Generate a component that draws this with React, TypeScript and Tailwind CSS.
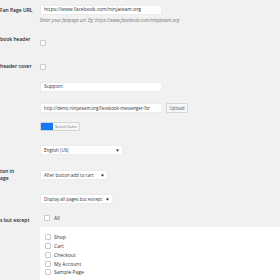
import React from "react";

const pages = ["Shop", "Cart", "Checkout", "My Account", "Sample Page"];

function Box({ className = "" }: { className?: string }) {
  return (
    <span
      className={`block w-[6px] h-[6px] shrink-0 border border-[#c8cbce] bg-white rounded-[1px] ${className}`}
    />
  );
}

function Select({ label, width }: { label: string; width: string }) {
  return (
    <div
      className={`flex items-center justify-between h-[10px] ${width} bg-white border border-[#ececec] pl-[3px] pr-[3px] text-[4.5px] text-[#32373c] whitespace-nowrap overflow-hidden`}
    >
      <span>{label}</span>
      <svg width="3" height="3" viewBox="0 0 4 3" className="shrink-0 ml-[2px]">
        <path d="M0 0 L4 0 L2 3 Z" fill="#222" />
      </svg>
    </div>
  );
}

export default function App() {
  const label = "w-[40px] shrink-0 font-semibold text-[#23282d] whitespace-nowrap overflow-hidden leading-[6px]";
  const input =
    "h-[10px] w-[122px] shrink-0 bg-white border border-[#ececec] px-[3px] flex items-center text-[#32373c] whitespace-nowrap overflow-hidden";

  return (
    <div
      className="w-[280px] h-[280px] overflow-hidden bg-[#f1f1f1] text-[5px] text-[#444]"
      style={{ fontFamily: '"Open Sans", "Noto Sans", sans-serif' }}
    >
      <div className="flex flex-col">
        {/* fan page url */}
        <div className="flex items-start mt-[5px]">
          <div className={`${label} pt-[2px]`}>Fan Page URL</div>
          <div className="flex flex-col">
            <div className={input}>https://www.facebook.com/ninjateam.org</div>
            <div className="mt-[2px] italic text-[#777] text-[4.6px] leading-[6px] whitespace-nowrap">
              Enter your fanpage url. Eg: https://www.facebook.com/ninjateam.org
            </div>
          </div>
        </div>

        {/* header */}
        <div className="flex items-start mt-[13px]">
          <div className={label}>book header</div>
          <Box className="mt-[4px]" />
        </div>

        {/* header cover */}
        <div className="flex items-start mt-[17px]">
          <div className={label}>header cover</div>
          <Box className="mt-[1px]" />
        </div>

        {/* title */}
        <div className="flex mt-[12px] pl-[40px]">
          <div className={input}>Support</div>
        </div>

        {/* avatar url */}
        <div className="flex items-center mt-[11px] pl-[40px]">
          <div className={`${input} text-[4.4px]`}>http://demo.ninjateam.org/facebook-messenger-for</div>
          <div className="ml-[4px] h-[10px] w-[22px] shrink-0 flex items-center justify-center border border-[#d4d4d4] bg-[#f7f7f7] text-[4.5px] text-[#555] rounded-[1px]">
            Upload
          </div>
        </div>

        {/* color */}
        <div className="flex mt-[9px] pl-[40px]">
          <div className="flex h-[9px] border border-[#d4d4d4] rounded-[1px] bg-[#f7f7f7]">
            <span className="block w-[12px] h-full bg-[#1877f2]" />
            <span className="flex items-center px-[2px] text-[4px] text-[#666] whitespace-nowrap">
              Select Color
            </span>
          </div>
        </div>

        {/* language */}
        <div className="flex mt-[14px] pl-[40px]">
          <Select label="English (US)" width="w-[83px]" />
        </div>

        {/* position */}
        <div className="flex items-start mt-[13px]">
          <div className={`${label} leading-[7px]`}>
            ton in
            <br />
            age
          </div>
          <div className="mt-[2px]">
            <Select label="After button add to cart" width="w-[68px]" />
          </div>
        </div>

        {/* display */}
        <div className="flex mt-[12px] pl-[40px]">
          <Select label="Display all pages but except" width="w-[73px]" />
        </div>

        {/* except */}
        <div className="flex items-start mt-[11px]">
          <div className={`${label} mt-[2px]`}>s but except</div>
          <div className="flex items-center gap-[4px] ml-[4px]">
            <Box />
            <span className="text-[#32373c] leading-[6px]">All</span>
          </div>
        </div>

        <div className="ml-[40px] mt-[4px] h-[54px] bg-white pt-[6px] pl-[5px]">
          {pages.map((p) => (
            <div key={p} className="flex items-center gap-[3px] h-[8.75px]">
              <Box />
              <span className="text-[#32373c] leading-[6px]">{p}</span>
            </div>
          ))}
        </div>
      </div>
    </div>
  );
}
